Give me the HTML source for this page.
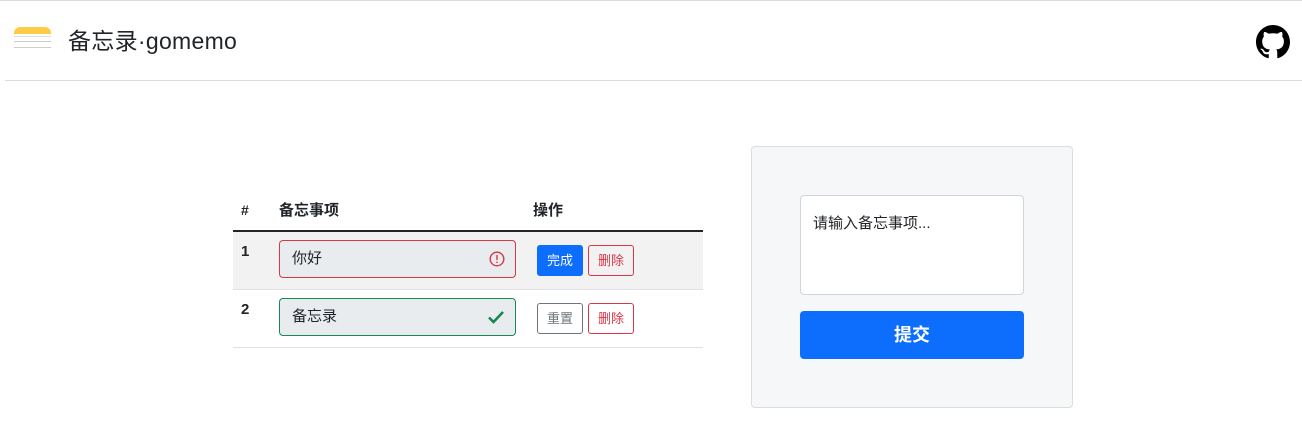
<!DOCTYPE html>
<html><head><meta charset="utf-8"><style>
*{box-sizing:border-box;margin:0;padding:0}
body{width:1302px;height:429px;background:#fff;font-family:"Liberation Sans","Noto Sans CJK SC",sans-serif;color:#212529;position:relative;overflow:hidden}
.abs{position:absolute}
.hdr{left:5px;top:80px;width:1297px;height:1px;background:#dcdcdc}
.title{left:68px;top:27px;font-size:23px;line-height:28px;letter-spacing:0.3px}
.inp{position:absolute;left:279px;width:237px;height:38px;border-radius:4px;background:#e9ecef;font-size:15px;padding-left:12px;line-height:36px}
.btn{position:absolute;height:31px;border-radius:3px;font-size:13px;line-height:29px;text-align:center;border:1px solid}
</style></head><body>
<div class="abs" style="left:0;top:0;width:1302px;height:1px;background:#dcdcdc"></div>
<div class="abs" style="left:14px;top:27px;width:37px;height:7px;background:#ffca45;border-radius:6px 6px 0 0"></div>
<div class="abs" style="left:14px;top:36px;width:37px;height:1px;background:#ddd"></div>
<div class="abs" style="left:14px;top:41px;width:37px;height:1px;background:#ccc"></div>
<div class="abs" style="left:14px;top:47px;width:37px;height:1px;background:#ccc"></div>
<div class="abs title">备忘录·gomemo</div>
<svg class="abs" style="left:1256px;top:25px" width="34" height="34" viewBox="0 0 16 16"><path fill="#000" d="M8 0C3.58 0 0 3.58 0 8c0 3.54 2.29 6.53 5.47 7.59.4.07.55-.17.55-.38 0-.19-.01-.82-.01-1.49-2.01.37-2.53-.49-2.69-.94-.09-.23-.48-.94-.82-1.13-.28-.15-.68-.52-.01-.53.63-.01 1.08.58 1.23.82.72 1.21 1.87.87 2.33.66.07-.52.28-.87.51-1.07-1.78-.2-3.64-.89-3.64-3.95 0-.87.31-1.59.82-2.15-.08-.2-.36-1.02.08-2.12 0 0 .67-.21 2.2.82.64-.18 1.32-.27 2-.27.68 0 1.36.09 2 .27 1.53-1.04 2.2-.82 2.2-.82.44 1.1.16 1.92.08 2.12.51.56.82 1.27.82 2.15 0 3.07-1.87 3.75-3.65 3.95.29.25.54.73.54 1.48 0 1.07-.01 1.93-.01 2.2 0 .21.15.46.55.38A8.013 8.013 0 0016 8c0-4.42-3.58-8-8-8z"/></svg>
<div class="abs hdr"></div>

<div class="abs" style="left:241px;top:202px;font-size:14px;font-weight:bold">#</div>
<div class="abs" style="left:279px;top:199px;font-size:15px;font-weight:bold">备忘事项</div>
<div class="abs" style="left:533px;top:199px;font-size:15px;font-weight:bold">操作</div>
<div class="abs" style="left:233px;top:230px;width:470px;height:2px;background:#212529"></div>
<div class="abs" style="left:233px;top:232px;width:470px;height:57px;background:#f2f2f2"></div>
<div class="abs" style="left:233px;top:289px;width:470px;height:1px;background:#dee2e6"></div>
<div class="abs" style="left:233px;top:347px;width:470px;height:1px;background:#dee2e6"></div>
<div class="abs" style="left:241px;top:243px;font-size:15px;font-weight:bold">1</div>
<div class="abs" style="left:241px;top:301px;font-size:15px;font-weight:bold">2</div>
<div class="inp" style="top:240px;border:1px solid #dc3545">你好</div>
<svg class="abs" style="left:489px;top:251px" width="16" height="16" viewBox="0 0 16 16"><circle cx="8" cy="8" r="6.8" fill="none" stroke="#dc3545" stroke-width="1.4"/><rect x="7.3" y="4" width="1.4" height="5" fill="#dc3545"/><circle cx="8" cy="11.2" r=".8" fill="#dc3545"/></svg>
<div class="inp" style="top:298px;border:1px solid #198754">备忘录</div>
<svg class="abs" style="left:487px;top:309px" width="18" height="16" viewBox="0 0 18 16"><path d="M2 8.5l4.5 4.5L16 3" fill="none" stroke="#198754" stroke-width="2.6"/></svg>
<div class="btn" style="left:537px;top:245px;width:46px;background:#0d6efd;border-color:#0d6efd;color:#fff">完成</div>
<div class="btn" style="left:588px;top:245px;width:46px;border-color:#dc3545;color:#dc3545">删除</div>
<div class="btn" style="left:537px;top:303px;width:46px;border-color:#6c757d;color:#6c757d">重置</div>
<div class="btn" style="left:588px;top:303px;width:46px;border-color:#dc3545;color:#dc3545">删除</div>

<div class="abs" style="left:751px;top:146px;width:322px;height:262px;background:#f6f7f8;border:1px solid #dcdcdc;border-radius:4px"></div>
<div class="abs" style="left:800px;top:195px;width:224px;height:100px;background:#fff;border:1px solid #ced4da;border-radius:4px;padding:18px 12px;font-size:15px;line-height:20px">请输入备忘事项...</div>
<div class="abs" style="left:800px;top:311px;width:224px;height:48px;background:#0d6efd;border-radius:4px;color:#fff;font-size:18px;font-weight:bold;text-align:center;line-height:48px">提交</div>
</body></html>
